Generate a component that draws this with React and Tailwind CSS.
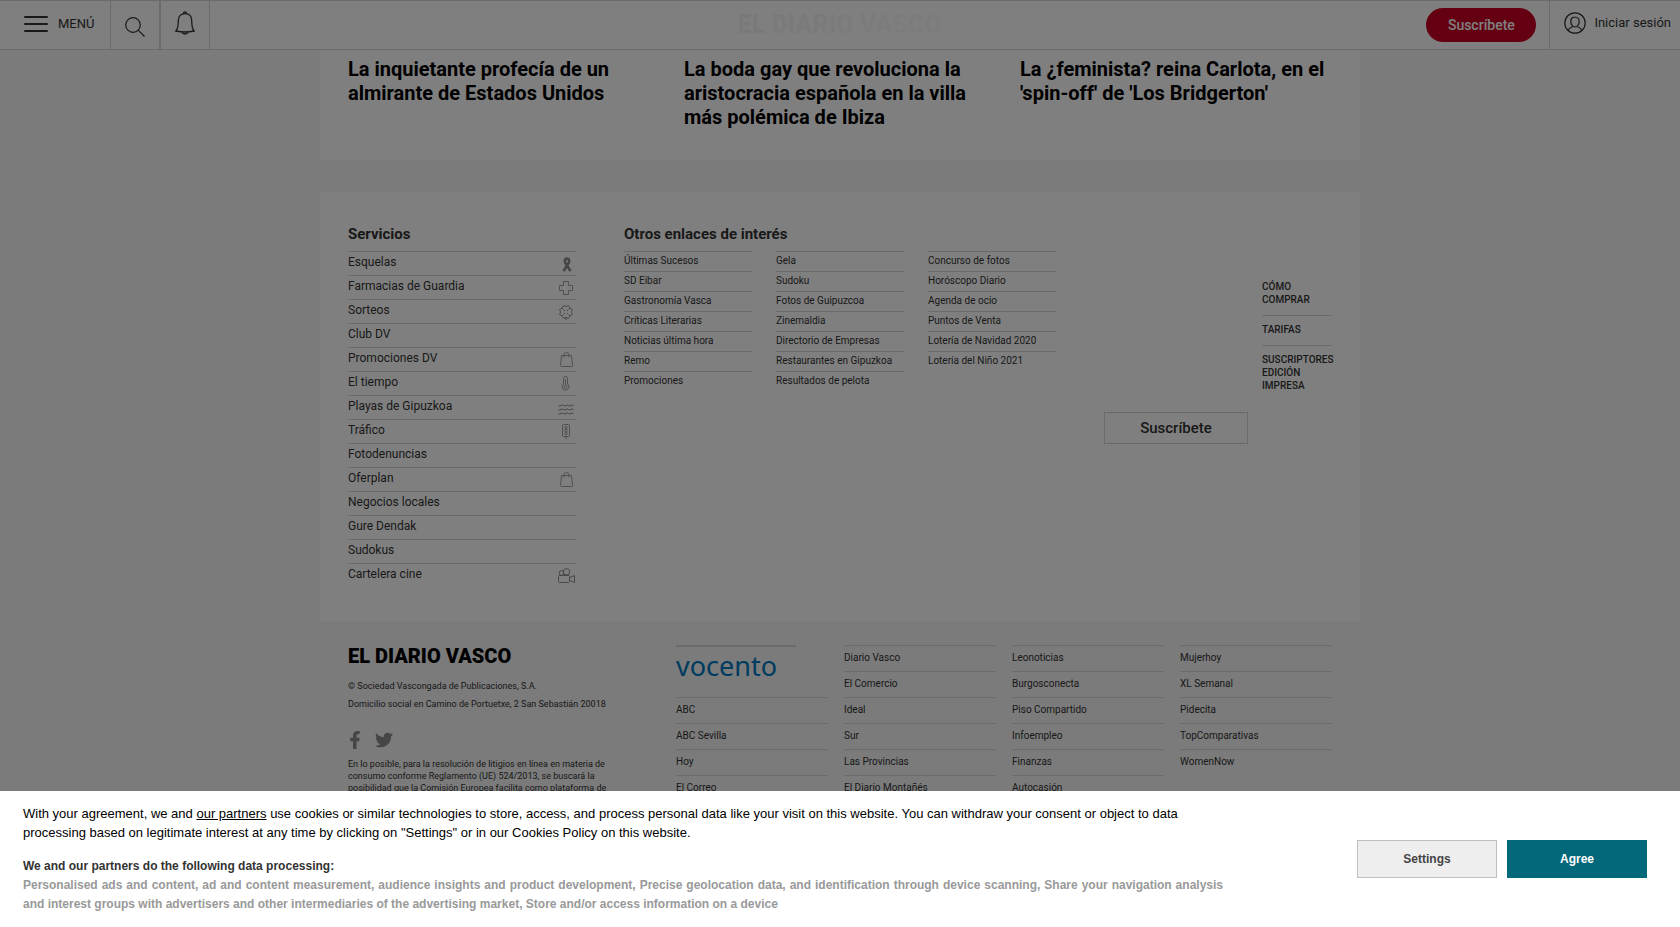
import React from "react";
import { FaFacebookF, FaTwitter } from "react-icons/fa";

const stroke = { fill: "none", stroke: "currentColor", strokeWidth: 1 };

function Ribbon() {
  return (
    <svg width="10" height="15" viewBox="0 0 10 15" className="mt-px mr-1" aria-hidden="true">
      <path
        d="M1.500 14L6.700 6C7.700 3.500 7 1.500 5 1.500S2.300 3.500 3.300 6L8.500 14"
        fill="none"
        stroke="#8a8a8a"
        strokeWidth="2.600"
      />
    </svg>
  );
}
function Cross() {
  return (
    <svg width="14" height="14" viewBox="0 0 14 14" className="mt-px mr-[3px]" aria-hidden="true">
      <path {...stroke} d="M4.500 .5h5v4h4v5h-4v4h-5v-4h-4v-5h4z" />
    </svg>
  );
}
function Clover() {
  return (
    <svg width="14" height="15" viewBox="0 0 14 15" className="mt-px mr-[3px] text-[#888]" aria-hidden="true">
      <path
        {...stroke}
        d="M7 2C6 .2 3.200 .2 3.500 3.500C.2 3.200 .2 6 2 7C.2 8 .2 10.800 3.500 10.500C3.200 13.800 6 13.800 7 12C8 13.800 10.800 13.800 10.500 10.500C13.800 10.800 13.800 8 12 7C13.800 6 13.800 3.200 10.500 3.500C10.800 .2 8 .2 7 2zM4.500 4.500l1.500 1.500M9.500 4.500L8 6M4.500 9.500L6 8M9.500 9.500L8 8M7 12v3"
      />
    </svg>
  );
}
function Bag() {
  return (
    <svg width="13" height="15" viewBox="0 0 13 15" className="mr-[3px]" aria-hidden="true">
      <path {...stroke} d="M1.500 3.500h10l1 10q0 1-1 1h-10q-1 0-1-1zM4 5.500V3q0-2.500 2.500-2.500T9 3v2.500" />
    </svg>
  );
}
function Thermometer() {
  return (
    <svg width="9" height="15" viewBox="0 0 9 15" className="mr-[6px]" aria-hidden="true">
      <path {...stroke} d="M2.500 8V2.500q0-2 2-2t2 2V8a3.400 3.400 0 1 1-4 0z" />
      <circle {...stroke} cx="4.500" cy="10.800" r="1.500" />
      <path {...stroke} d="M4.500 3v6" />
    </svg>
  );
}
function Waves() {
  const wave = "q1.250 1.200 2.500 0t2.500 0t2.500 0t2.500 0t2.500 0t2.500 0";
  return (
    <svg width="16" height="12" viewBox="0 0 16 12" className="mt-1 mr-[2px] text-[#888]" aria-hidden="true">
      <path {...stroke} d={"M.5 1.500" + wave + "M.5 5.500" + wave + "M.5 9.500" + wave} />
    </svg>
  );
}
function TrafficLight() {
  return (
    <svg width="8" height="15" viewBox="0 0 8 15" className="mr-[6px]" aria-hidden="true">
      <rect {...stroke} x=".5" y=".5" width="7" height="12" rx="1" />
      <path {...stroke} d="M4 12.500V15" />
      <circle {...stroke} cx="4" cy="3.500" r="1.200" />
      <circle {...stroke} cx="4" cy="6.500" r="1.200" />
      <circle {...stroke} cx="4" cy="9.500" r="1.200" />
    </svg>
  );
}
function Camera() {
  return (
    <svg width="17" height="15" viewBox="0 0 17 15" className="mr-px text-[#909090]" aria-hidden="true">
      <rect {...stroke} x=".5" y="7.500" width="11" height="7" rx="1" />
      <circle {...stroke} cx="3.500" cy="5" r="2.300" />
      <circle {...stroke} cx="8.500" cy="3.800" r="3.200" />
      <path {...stroke} d="M12 9.500l4.500-2v7l-4.500-2" />
    </svg>
  );
}

const services = [
  ["Esquelas", Ribbon],
  ["Farmacias de Guardia", Cross],
  ["Sorteos", Clover],
  ["Club DV"],
  ["Promociones DV", Bag],
  ["El tiempo", Thermometer],
  ["Playas de Gipuzkoa", Waves],
  ["Tráfico", TrafficLight],
  ["Fotodenuncias"],
  ["Oferplan", Bag],
  ["Negocios locales"],
  ["Gure Dendak"],
  ["Sudokus"],
  ["Cartelera cine", Camera],
];

const others = [
  ["Últimas Sucesos", "SD Eibar", "Gastronomía Vasca", "Críticas Literarias", "Noticias última hora", "Remo", "Promociones"],
  ["Gela", "Sudoku", "Fotos de Guipuzcoa", "Zinemaldia", "Directorio de Empresas", "Restaurantes en Gipuzkoa", "Resultados de pelota"],
  ["Concurso de fotos", "Horóscopo Diario", "Agenda de ocio", "Puntos de Venta", "Lotería de Navidad 2020", "Lotería del Niño 2021"],
];

const brands = [
  ["ABC", "ABC Sevilla", "Hoy", "El Correo"],
  ["Diario Vasco", "El Comercio", "Ideal", "Sur", "Las Provincias", "El Diario Montañés"],
  ["Leonoticias", "Burgosconecta", "Piso Compartido", "Infoempleo", "Finanzas", "Autocasión"],
  ["Mujerhoy", "XL Semanal", "Pidecita", "TopComparativas", "WomenNow"],
];

const headlines = [
  "La inquietante profecía de un almirante de Estados Unidos",
  "La boda gay que revoluciona la aristocracia española en la villa más polémica de Ibiza",
  "La ¿feminista? reina Carlota, en el 'spin-off' de 'Los Bridgerton'",
];

function Header() {
  return (
    <header className="flex h-[50px] border-y border-[#d6d6d6] bg-white text-[#333]">
      <button className="flex w-[111px] items-center gap-[10px] border-r border-[#d6d6d6] pb-[3px] pl-6 text-[13px]">
        <svg width="24" height="18" viewBox="0 0 24 18" aria-hidden="true">
          <path d="M1 2h22M1 9h22M1 16h22" stroke="currentColor" strokeWidth="2" strokeLinecap="round" />
        </svg>
        MENÚ
      </button>
      <button aria-label="Buscar" className="flex w-[50px] items-center justify-center border-r-2 border-[#d6d6d6] pt-1">
        <svg width="20" height="20" viewBox="0 0 20 20" aria-hidden="true">
          <circle cx="8" cy="8" r="7.300" fill="none" stroke="currentColor" strokeWidth="1.200" />
          <path d="M13.200 13.200L19.500 19.500" stroke="currentColor" strokeWidth="1.200" />
        </svg>
      </button>
      <button aria-label="Notificaciones" className="flex w-[49px] items-center justify-center border-r border-[#d6d6d6] pb-1">
        <svg width="20" height="24" viewBox="0 0 20 24" fill="none" stroke="currentColor" strokeWidth="1.300" aria-hidden="true">
          <path d="M.8 20C3 18 3.300 15 3.300 9.500C3.300 5 6 2.600 10 2.600S16.700 5 16.700 9.500C16.700 15 17 18 19.200 20Q10 22 .8 20z" />
          <path d="M8.500 2.500q0-1.700 1.500-1.700t1.500 1.700M7 21.500q3 3 6 0" />
        </svg>
      </button>
      <div className="flex flex-1 items-center justify-center pl-[43px] text-[25px] font-black">
        <span className="bg-linear-to-r from-black/5 to-black/2 bg-clip-text text-transparent">EL DIARIO VASCO</span>
      </div>
      <div className="flex items-center pr-[13px]">
        <button className="h-[34px] w-[110px] rounded-full bg-[#c80022] text-[14px] font-medium text-white">Suscríbete</button>
      </div>
      <button className="flex items-center gap-2 border-l border-[#d6d6d6] pr-[9px] pb-1 pl-[14px] text-[13px]">
        <svg width="22" height="22" viewBox="0 0 22 22" fill="none" stroke="currentColor" strokeWidth="1.200" aria-hidden="true">
          <circle cx="11" cy="11" r="10.200" />
          <path d="M11 5C8.300 5 6.800 7 6.800 9.500S8.300 15 11 15S15.200 12 15.200 9.500S13.700 5 11 5zM4 18.200q1.500-2.500 4.500-3.500M18 18.200q-1.500-2.500-4.500-3.500" />
        </svg>
        Iniciar sesión
      </button>
    </header>
  );
}

function LinkRow({ children, className }) {
  return (
    <li className={"border-t border-[#d6d6d6] " + className}>
      <a href="#">{children}</a>
    </li>
  );
}

function ServicesCard() {
  return (
    <section className="mt-8 flex items-start bg-white px-7 pt-[30px] pb-[34px]">
      <div className="w-[228px]">
        <h2 className="h-[29px] text-[15px] leading-[24px] font-bold">Servicios</h2>
        <ul className="text-[12px] leading-5">
          {services.map(([name, Icon]) => (
            <li key={name} className="flex h-6 justify-between border-t border-[#d6d6d6]">
              <a href="#">{name}</a>
              <span className="pt-1 text-[#a0a0a0]">{Icon && <Icon />}</span>
            </li>
          ))}
        </ul>
      </div>
      <div className="ml-12">
        <h2 className="h-[29px] text-[15px] leading-[24px] font-bold">Otros enlaces de interés</h2>
        <div className="grid grid-cols-[128px_128px_128px] gap-6 text-[10px] leading-[17px]">
          {others.map((list) => (
            <ul key={list[0]}>
              {list.map((name) => (
                <LinkRow key={name} className="h-5">{name}</LinkRow>
              ))}
            </ul>
          ))}
        </div>
      </div>
      <div className="ml-auto flex items-end gap-[14px] pt-[58px]">
        <button className="-mb-[52px] h-8 w-36 border border-[#d6d6d6] text-[15px] font-medium">Suscríbete</button>
        <ul className="w-[70px] text-[10px] leading-[13px] font-medium">
          <li className="border-b border-[#d6d6d6] pb-[9px]"><a href="#">CÓMO COMPRAR</a></li>
          <li className="border-b border-[#d6d6d6] pt-[7px] pb-[9px]"><a href="#">TARIFAS</a></li>
          <li className="pt-[7px]"><a href="#">SUSCRIPTORES EDICIÓN IMPRESA</a></li>
        </ul>
      </div>
    </section>
  );
}

function Footer() {
  return (
    <footer className="flex justify-between px-7 pt-6">
      <div className="w-[272px] pt-px text-[9px] leading-3">
        <p className="text-[20px] leading-5 font-black text-black">EL DIARIO VASCO</p>
        <p className="mt-[14px]">© Sociedad Vascongada de Publicaciones, S.A.</p>
        <p className="mt-[6px]">Domicilio social en Camino de Portuetxe, 2 San Sebastián 20018</p>
        <div className="mt-[21px] mb-[9px] flex gap-[13px] text-[18px] text-[#8c8c8c]">
          <a href="#" aria-label="Facebook"><FaFacebookF className="w-[14px]" /></a>
          <a href="#" aria-label="Twitter"><FaTwitter /></a>
        </div>
        <p>
          En lo posible, para la resolución de litigios en línea en materia de consumo conforme Reglamento (UE) 524/2013, se buscará la
          posibilidad que la Comisión Europea facilita como plataforma de
        </p>
      </div>
      <div className="grid grid-cols-[152px_152px_152px_152px] gap-4 text-[10px] leading-6">
        {brands.map((list, i) => (
          <div key={list[0]}>
            {i === 0 && (
              <div className="h-[52px]">
                <div className="w-[120px] border-t-2 border-[#d6d6d6] pt-[3px] font-['Noto_Sans'] text-[27px] leading-8 text-[#0079c1]">vocento</div>
              </div>
            )}
            <ul>
              {list.map((name) => (
                <LinkRow key={name} className="h-[26px]">{name}</LinkRow>
              ))}
            </ul>
          </div>
        ))}
      </div>
    </footer>
  );
}

function ConsentBanner() {
  return (
    <section role="dialog" aria-label="Cookies" className="fixed inset-x-0 bottom-0 flex h-[136px] items-center justify-between bg-white pr-[33px] pl-[23px] font-['Liberation_Sans',sans-serif]">
      <div className="w-[1200px] leading-[19px]">
        <p className="text-[13px] text-black">
          With your agreement, we and <a href="#" className="underline">our partners</a> use cookies or similar technologies to store, access,
          and process personal data like your visit on this website. You can withdraw your consent or object to data processing based on
          legitimate interest at any time by clicking on "Settings" or in our Cookies Policy on this website.
        </p>
        <h2 className="mt-[15px] text-[12px] font-bold text-[#333]">We and our partners do the following data processing:</h2>
        <p className="text-justify text-[12px] font-bold text-[#999]">
          Personalised ads and content, ad and content measurement, audience insights and product development, Precise geolocation data, and
          identification through device scanning, Share your navigation analysis and interest groups with advertisers and other
          intermediaries of the advertising market, Store and/or access information on a device
        </p>
      </div>
      <div className="flex gap-[10px] text-[12px] font-bold">
        <button className="h-[38px] w-[140px] border border-[#bfbfbf] bg-[#eee] text-[#444]">Settings</button>
        <button className="h-[38px] w-[140px] bg-[#04687b] text-white">Agree</button>
      </div>
    </section>
  );
}

export default function App() {
  return (
    <div className="min-h-screen bg-[#f6f6f6] font-['Roboto',sans-serif] text-[#333]">
      <Header />
      <main className="mx-auto max-w-[1040px]">
        <section className="grid grid-cols-3 gap-6 bg-white px-7 pt-[7px] pb-[31px]">
          {headlines.map((text) => (
            <h2 key={text} className="text-[20px] leading-6 font-bold text-black">
              <a href="#">{text}</a>
            </h2>
          ))}
        </section>
        <ServicesCard />
        <Footer />
      </main>
      <div className="fixed inset-0 bg-black/50" />
      <ConsentBanner />
    </div>
  );
}
